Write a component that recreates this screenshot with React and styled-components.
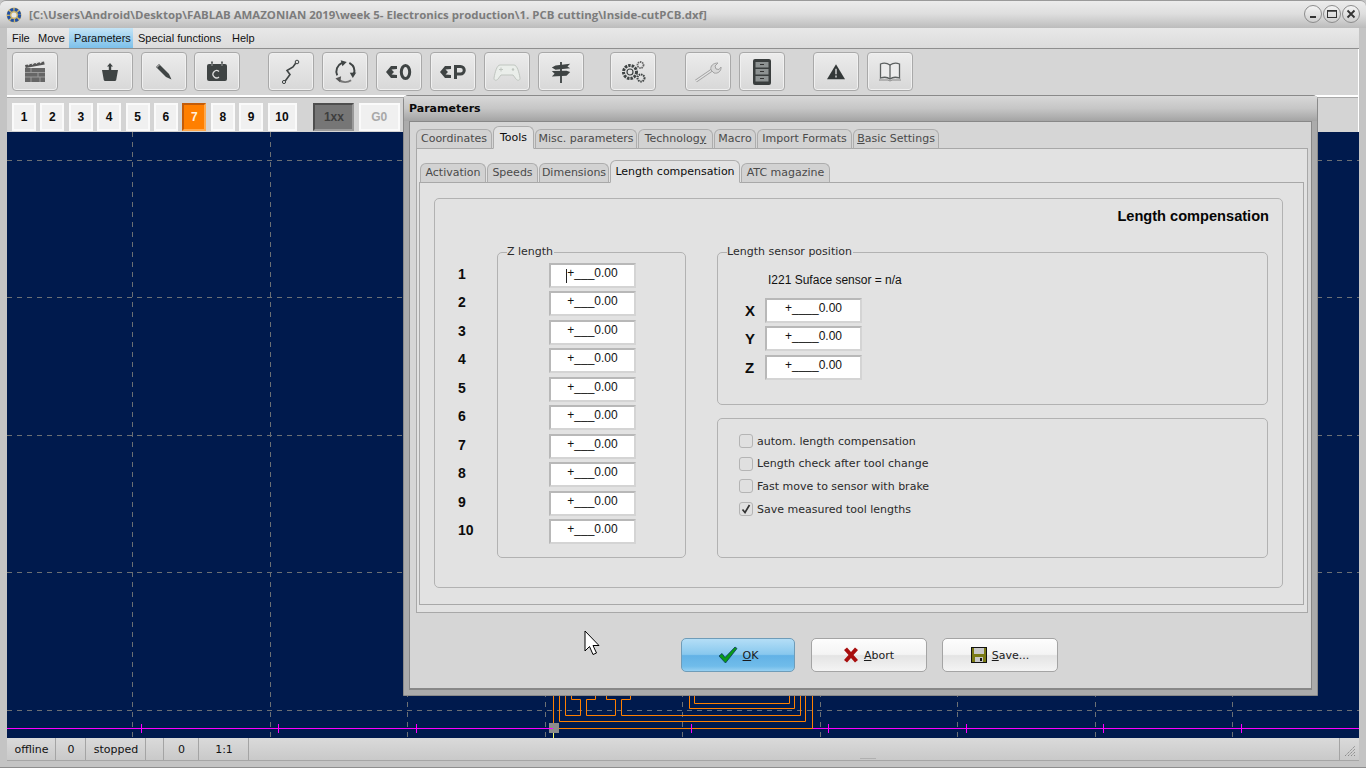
import React from 'react'
import styled, { createGlobalStyle, css } from 'styled-components'

const UI_FONT = '"DejaVu Sans", sans-serif'
const ARIAL = '"Liberation Sans", Arial, sans-serif'

const GlobalStyle = createGlobalStyle`
  html, body {
    margin: 0;
    padding: 0;
    overflow: hidden;
    background: #c8c8c8;
  }
`

const TITLE =
  '[C:\\Users\\Android\\Desktop\\FABLAB AMAZONIAN 2019\\week 5- Electronics production\\1. PCB cutting\\Inside-cutPCB.dxf]'

const MENU = [
  { label: 'File', width: 26 },
  { label: 'Move', width: 36 },
  { label: 'Parameters', width: 64, active: true },
  { label: 'Special functions', width: 94 },
  { label: 'Help', width: 30 },
]

const NUMBERS = [1, 2, 3, 4, 5, 6, 7, 8, 9, 10]

const OUTER_TABS = [
  { label: 'Coordinates', width: 76 },
  { label: 'Tools', width: 41, active: true },
  { label: 'Misc. parameters', width: 102 },
  { label: <>Technolog<u>y</u></>, width: 75 },
  { label: 'Macro', width: 42 },
  { label: 'Import Formats', width: 95 },
  { label: <><u>B</u>asic Settings</>, width: 86 },
]

const INNER_TABS = [
  { label: 'Activation', width: 66 },
  { label: 'Speeds', width: 51 },
  { label: 'Dimensions', width: 70 },
  { label: 'Length compensation', width: 130, active: true },
  { label: 'ATC magazine', width: 89 },
]

const CHECKS = [
  { label: 'autom. length compensation', checked: false },
  { label: 'Length check after tool change', checked: false },
  { label: 'Fast move to sensor with brake', checked: false },
  { label: 'Save measured tool lengths', checked: true },
]

const STATUS = [
  { label: 'offline', width: 49 },
  { label: '0', width: 30 },
  { label: 'stopped', width: 60 },
  { label: '', width: 18 },
  { label: '0', width: 35 },
  { label: '1:1', width: 50 },
]

const GRID_X = [132.5, 270.5, 407.5, 545.5, 682.5, 820.5, 957.5, 1095.5, 1232.5]
const GRID_Y = [160.5, 297.5, 435.5, 572.5, 710.5]
const TICKS = [141.5, 278.5, 416.5, 691.5, 828.5, 966.5, 1103.5, 1241.5]

const Window = styled.div`
  width: 1366px;
  height: 768px;
  display: flex;
  flex-direction: column;
  box-sizing: border-box;
  position: relative;
  overflow: hidden;
  background: #c4c4c4;
  border-bottom: 1px solid #8e8e8e;
  padding: 0 7px 6px;
  font-family: ${UI_FONT};
  font-size: 11px;
  color: #111;
`

const TitleBar = styled.div`
  height: 28px;
  margin: 0 -7px;
  padding: 0 6px;
  box-sizing: border-box;
  display: flex;
  align-items: center;
  gap: 7px;
  border-top: 1px solid #9a9a9a;
  border-radius: 6px 6px 0 0;
  background: linear-gradient(#ececec, #dedede 48%, #bcbcbc);
`

const TitleText = styled.span`
  flex: 1;
  font-family: "Open Sans", sans-serif;
  font-weight: 700;
  font-size: 11.43px;
  color: #7c7c7c;
  white-space: nowrap;
`

const WindowButtons = styled.div`
  display: flex;
  gap: 1px;
  margin-top: -1px;
`

const RoundButton = styled.div`
  width: 18px;
  height: 18px;
  box-sizing: border-box;
  border-radius: 50%;
  border: 1px solid #8c8c8c;
  background: linear-gradient(#f4f4f4, #cfcfcf);
  display: flex;
  align-items: center;
  justify-content: center;
`

const MenuBar = styled.div`
  height: 21px;
  box-sizing: border-box;
  display: flex;
  border-bottom: 1px solid #8f8f8f;
  background: linear-gradient(#e8e8e8, #dcdcdc);
`

const MenuItem = styled.div`
  width: ${(p) => p.$width}px;
  display: flex;
  align-items: center;
  padding-left: 5px;
  box-sizing: border-box;
  font-family: ${ARIAL};
  font-size: 11px;
  ${(p) =>
    p.$active &&
    css`
      background: linear-gradient(#c4e4f6, #7cc0ea);
    `}
`

const ToolBar = styled.div`
  height: 46px;
  box-sizing: border-box;
  display: flex;
  align-items: flex-start;
  padding: 3px 0 0 5px;
  background: #d6d6d6;
  border-right: 1px solid #fff;
`

const ToolGroup = styled.div`
  display: flex;
  gap: ${(p) => p.$gap}px;
  margin-right: ${(p) => p.$after}px;
`

const ToolButton = styled.div`
  width: 46px;
  height: 39px;
  box-sizing: border-box;
  display: flex;
  align-items: center;
  justify-content: center;
  border: 1px solid #a9a9a9;
  border-radius: 4px;
  background: linear-gradient(#ececec, #d8d8d8);
  box-shadow: inset 0 0 0 1px #f0f0f0;
`

const NumberRow = styled.div`
  height: 37px;
  box-sizing: border-box;
  display: flex;
  gap: 4.4px;
  padding: 6px 0 0 5px;
  border-top: 2px solid #fff;
  border-right: 1px solid #fff;
  box-shadow: inset 0 1px 0 #a8a8a8;
  background: #d4d4d4;
`

const NumberButton = styled.div`
  width: ${(p) => p.$width || 24}px;
  height: 28px;
  box-sizing: border-box;
  display: flex;
  align-items: center;
  justify-content: center;
  font-family: ${ARIAL};
  font-weight: 700;
  font-size: 12px;
  color: #0c0c0c;
  background: #f0f0f0;
  border: 2px solid #fafafa;
  margin-left: ${(p) => p.$offset || 0}px;
  ${(p) =>
    p.$active &&
    css`
      background: #ff7f00;
      color: #fff0dd;
      border-color: #c45c08 #ffa94d #ffa94d #c45c08;
    `}
  ${(p) =>
    p.$mode === 'dark' &&
    css`
      background: #767676;
      color: #3e3e3e;
      border-color: #4e4e4e #9a9a9a #9a9a9a #4e4e4e;
    `}
  ${(p) =>
    p.$mode === 'light' &&
    css`
      color: #a8a8a8;
    `}
`

const Canvas = styled.div`
  flex: 1;
  position: relative;
  background: #001a4d;
  min-height: 0;
`

const CanvasDrawing = styled.svg`
  display: block;
  width: 100%;
  height: 100%;
`

const StatusBar = styled.div`
  height: 23px;
  box-sizing: border-box;
  display: flex;
  position: relative;
  background: linear-gradient(#dadada, #c9c9c9);
  border-bottom: 1px solid #a6a6a6;
`

const StatusCell = styled.div`
  width: ${(p) => p.$width}px;
  box-sizing: border-box;
  display: flex;
  align-items: center;
  justify-content: center;
  font-family: ${UI_FONT};
  font-size: 11px;
  padding-left: 1px;
  border-right: 1px solid #a4a4a4;
`

const StatusFill = styled.div`
  flex: 1;
`

const GripCell = styled.div`
  width: 19px;
  border-left: 1px solid #a4a4a4;
  display: flex;
  align-items: flex-end;
  justify-content: center;
  padding-bottom: 3px;
`

const Handle = styled.div`
  position: absolute;
  left: 853px;
  bottom: 1px;
  width: 16px;
  height: 1px;
  background: #b0b0b0;
`

const Dialog = styled.div`
  position: absolute;
  left: 403px;
  top: 95px;
  width: 915px;
  height: 601px;
  box-sizing: border-box;
  display: flex;
  flex-direction: column;
  padding: 0 5px 5px 5px;
  background: #ababab;
  border: 1px solid #8a8a8a;
  border-radius: 5px 5px 0 0;
  font-family: ${UI_FONT};
`

const DialogTitle = styled.div`
  height: 25px;
  margin: 0 -5px;
  padding: 0 5px;
  display: flex;
  align-items: center;
  font-family: ${UI_FONT};
  font-size: 11px;
  font-weight: 700;
  color: #0a0a0a;
  background: linear-gradient(#d8d8d8, #c6c6c6 50%, #a4a4a4);
`

const DialogBody = styled.div`
  flex: 1;
  display: flex;
  flex-direction: column;
  background: #d6d6d6;
  border: 1px solid #888;
  border-width: 1px 1px 2px 1px;
  padding: 5px 3px 0 6px;
`

const TabRow = styled.div`
  display: flex;
  align-items: flex-end;
  height: ${(p) => p.$height}px;
  gap: 1px;
  padding-left: ${(p) => p.$inset || 0}px;
  margin-bottom: -1px;
  position: relative;
  z-index: 1;
`

const Tab = styled.div`
  width: ${(p) => p.$width}px;
  height: 20px;
  box-sizing: border-box;
  display: flex;
  align-items: center;
  justify-content: center;
  border: 1px solid #adadad;
  border-bottom-color: #a8a8a8;
  border-radius: 6px 6px 0 0;
  background: #d2d2d2;
  color: #4a4a4a;
  font-size: 11px;
  white-space: nowrap;
  padding-bottom: ${(p) => p.$lift}px;
  ${(p) =>
    p.$active &&
    css`
      height: 23px;
      color: #0c0c0c;
      background: #e2e2e2;
      border-bottom-color: #e2e2e2;
      padding-bottom: ${p.$lift - 1}px;
    `}
`

const TabPane = styled.div`
  flex: ${(p) => (p.$grow ? 1 : 'none')};
  display: flex;
  flex-direction: column;
  height: ${(p) => p.$height || 'auto'};
  box-sizing: border-box;
  background: #e2e2e2;
  border: 1px solid #a8a8a8;
  padding: ${(p) => p.$padding};
`

const Panel = styled.div`
  flex: 1;
  box-sizing: border-box;
  border: 1px solid #b2b2b2;
  border-radius: 5px;
  display: flex;
  flex-direction: column;
  padding: 0 13px 29px 23px;
`

const PanelHeading = styled.div`
  font-family: ${ARIAL};
  font-weight: 700;
  font-size: 14.6px;
  text-align: right;
  height: 53px;
  padding-top: 9px;
  box-sizing: border-box;
  color: #060606;
`

const Columns = styled.div`
  flex: 1;
  display: grid;
  grid-template-columns: 39px 189px 582px;
  column-gap: 0;
`

const NumberColumn = styled.div`
  padding-top: 10px;
`

const RowLabel = styled.div`
  height: 28.45px;
  line-height: 24px;
  font-family: ${ARIAL};
  font-weight: 700;
  font-size: 14px;
  color: #0c0c0c;
`

const GroupBox = styled.div`
  position: relative;
  box-sizing: border-box;
  border: 1px solid #b2b2b2;
  border-radius: 5px;
  height: ${(p) => p.$height || 'auto'};
  padding: ${(p) => p.$padding};
`

const Legend = styled.span`
  position: absolute;
  top: -8px;
  left: ${(p) => p.$left}px;
  padding: 0 1px 0 0;
  background: #e2e2e2;
  font-size: 11px;
  line-height: 14px;
  color: #2c2c2c;
`

const FieldBox = styled.div`
  position: relative;
  width: ${(p) => p.$width}px;
  height: 25px;
  box-sizing: border-box;
  background: #fff;
  border: 2px solid #d4d4d4;
  border-top-color: #b8b8b8;
  border-left-color: #b8b8b8;
  display: flex;
  justify-content: center;
  font-family: ${ARIAL};
  font-size: 12px;
  line-height: 16px;
  color: #111;
  ${(p) =>
    p.$caret &&
    css`
      &::before {
        content: '';
        position: absolute;
        left: 15px;
        top: 4px;
        width: 1px;
        height: 14px;
        background: #222;
      }
    `}
`

const FieldRow = styled.div`
  height: 28.45px;
  display: flex;
  justify-content: ${(p) => p.$justify || 'flex-start'};
`

const RightColumn = styled.div`
  display: flex;
  flex-direction: column;
  gap: 13px;
  padding-left: 31px;
`

const SensorText = styled.div`
  font-family: ${ARIAL};
  font-size: 12px;
  padding-left: 50px;
  height: 45px;
  box-sizing: border-box;
  padding-top: 20px;
  color: #111;
`

const AxisLabel = styled.div`
  width: 47px;
  padding-left: 27px;
  box-sizing: border-box;
  font-family: ${ARIAL};
  font-weight: 700;
  font-size: 15px;
  line-height: 25px;
  color: #0c0c0c;
`

const CheckGroup = styled(GroupBox)`
  flex: 1;
`

const CheckRow = styled.label`
  height: 22.6px;
  display: flex;
  align-items: center;
  gap: 4px;
  font-size: 11px;
  color: #2a2a2a;
`

const CheckBox = styled.span`
  width: 14px;
  height: 14px;
  box-sizing: border-box;
  border: 1px solid #b4b4b4;
  border-radius: 3px;
  background: #e0e0e0;
  display: flex;
  align-items: center;
  justify-content: center;
`

const ButtonRow = styled.div`
  flex: 1;
  display: flex;
  padding: 25px 0 0 265px;
  gap: 15.5px;
`

const DialogButton = styled.div`
  width: ${(p) => p.$width}px;
  height: 34px;
  box-sizing: border-box;
  display: flex;
  align-items: center;
  justify-content: center;
  gap: 5px;
  border-radius: 5px;
  border: 1px solid #a4a4a4;
  font-family: ${UI_FONT};
  font-size: 11px;
  color: #1a1a1a;
  background: linear-gradient(#fdfdfd, #f4f4f4 48%, #e4e4e4 52%, #f4f4f4);
  ${(p) =>
    p.$primary &&
    css`
      border-color: #6f9cb8;
      background: linear-gradient(#b4def6, #88c8ee 48%, #62b2e6 52%, #70bcea 85%, #96d0f2);
    `}
`

const Pointer = styled.svg`
  position: absolute;
  left: 584px;
  top: 630px;
`

const Logo = () => (
  <svg width="16" height="16" viewBox="0 0 16 16">
    <circle cx="8" cy="8" r="7.5" fill="#c9b36a" />
    <circle cx="8" cy="8" r="5.6" fill="none" stroke="#1f4fa8" strokeWidth="3" strokeDasharray="3 1.4" />
    <circle cx="8" cy="8" r="2.6" fill="#e8e8e8" />
  </svg>
)

const ICON = '#3f4444'

// the pointed loop shared by the "back to 0" and "back to P" buttons
const BackLoop = () => (
  <path d="M13 5H7L2 11l5 6h6v-3l-5.500-.5L10 11 7.500 8.500 13 8z" fill={ICON} />
)

const toolIcons = [
  // clapper board
  <svg key="clap" width="24" height="24" viewBox="0 0 24 24">
    <path d="M2 5l19-3.500.7 3L2.700 8z" fill="#555" />
    <path d="M5 5.200l2-2.200M9 4.500l2-2.200M13 3.700l2-2.200M17 3l2-1.700" stroke="#ddd" strokeWidth="1.200" />
    <rect x="2" y="8" width="20" height="14" fill="#666" />
    <path d="M2 12.500h20M2 17h20M8 8v4.500M15 12.500V17M8 17v5M17 17v5" stroke="#9a9a9a" />
  </svg>,
  // box with arrow up
  <svg key="box" width="20" height="24" viewBox="0 0 20 24">
    <path d="M10 3l3 3.500h-1.800V10H8.800V6.500H7z" fill={ICON} />
    <path d="M2 10h16l-1.800 10a1.500 1.500 0 0 1-1.500 1H5.300a1.500 1.500 0 0 1-1.500-1z" fill={ICON} />
  </svg>,
  // pencil
  <svg key="pen" width="20" height="20" viewBox="0 0 20 20">
    <path d="M2 5l3-3 10 10 2.500 5.500-5.500-2.500z" fill={ICON} />
    <path d="M2.500 5.500l3-3" stroke="#9c9c9c" strokeWidth="1.500" />
  </svg>,
  // calendar with C
  <svg key="cal" width="24" height="24" viewBox="0 0 24 24">
    <rect x="2" y="4" width="20" height="17" rx="2" fill={ICON} />
    <path d="M7 1.500v5M17 1.500v5" stroke={ICON} strokeWidth="1.600" />
    <path d="M7 3v3M17 3v3" stroke="#ddd" strokeWidth=".6" />
    <path d="M14 11.500a3.600 3.600 0 1 0 0 5.400" stroke="#ddd" strokeWidth="1.300" fill="none" />
  </svg>,
  // path with nodes
  <svg key="path" width="24" height="26" viewBox="0 0 24 26">
    <path d="M5.500 23l5.500-7.500-3-4 6-3.500 3.500-5" stroke={ICON} strokeWidth="1.600" fill="none" />
    <circle cx="5" cy="23" r="1.600" fill="#ddd" stroke={ICON} />
    <circle cx="18" cy="3" r="1.800" fill="#ddd" stroke={ICON} />
  </svg>,
  // rotating arrows
  <svg key="cycle" width="26" height="26" viewBox="0 0 30 30">
    <path d="M6 19C3.500 13 6 7 11.500 4.500" stroke={ICON} strokeWidth="2.200" fill="none" />
    <path d="M10 1.500l7 2-5 5z" fill={ICON} />
    <path d="M20 4.500c5 3 7 8 5 13" stroke={ICON} strokeWidth="2.200" fill="none" />
    <path d="M28 15.500l-4 6.500-3.500-6z" fill={ICON} />
    <path d="M22 24.500c-4 3-10 3-14-.5" stroke="#777" strokeWidth="2.200" fill="none" />
    <path d="M10.500 20l-1 7-5.500-4.500z" fill="#555" />
  </svg>,
  // back to 0
  <svg key="zero" width="30" height="22" viewBox="0 0 30 22">
    <BackLoop />
    <ellipse cx="21.500" cy="11" rx="4.200" ry="6.500" fill="none" stroke={ICON} strokeWidth="3" />
  </svg>,
  // back to P
  <svg key="park" width="30" height="22" viewBox="0 0 30 22">
    <BackLoop />
    <path d="M17.500 18V5.500h5a3.500 3.500 0 0 1 0 7.500h-5" fill="none" stroke={ICON} strokeWidth="3" />
  </svg>,
  // gamepad, greyed out
  <svg key="pad" width="28" height="20" viewBox="0 0 28 20">
    <path d="M7 3h14c3 0 5 7 6 13 .3 2.500-2.500 3-4 1l-3-4H8l-3 4c-1.500 2-4.300 1.500-4-1C2 10 4 3 7 3z" fill="#eaeeea" stroke="#c0c6c0" />
    <circle cx="20" cy="7.500" r="1.200" fill="#c0c6c0" />
    <path d="M6 7.500h4M8 5.500v4" stroke="#c0c6c0" />
  </svg>,
  // signpost
  <svg key="sign" width="22" height="24" viewBox="0 0 24 26">
    <path d="M12 2v23" stroke={ICON} strokeWidth="2" />
    <path d="M2 8l4-2 16-2-3 3 3 2-16 1.500z" fill={ICON} />
    <path d="M22 13l-4-1.500-16 .5 3 3-3 3 16-1z" fill={ICON} />
  </svg>,
  // gears
  <svg key="gears" width="26" height="26" viewBox="0 0 26 26">
    <circle cx="10" cy="13" r="6.500" fill="none" stroke={ICON} strokeWidth="3" strokeDasharray="2.500 1" />
    <circle cx="10" cy="13" r="3" fill="none" stroke={ICON} strokeWidth="1.200" />
    <circle cx="20.500" cy="6" r="3" fill="none" stroke="#666" strokeWidth="1.800" strokeDasharray="1.500 .7" />
    <circle cx="21" cy="19" r="3.500" fill="none" stroke={ICON} strokeWidth="2" strokeDasharray="1.500 .8" />
  </svg>,
  // wrench, greyed out
  <svg key="wrench" width="30" height="26" viewBox="0 0 30 26">
    <path d="M3 22L19 11" stroke="#a2a2a2" strokeWidth="3" />
    <path d="M3 22L19 11" stroke="#e6e6e6" strokeWidth="1.400" />
    <path d="M18 11c-1-4 2-7 7-7l-3 3 1 3 3 .5 2-2.500c.5 4-3 7-7 6z" fill="#d8d8d8" stroke="#a2a2a2" />
  </svg>,
  // cabinet
  <svg key="cab" width="20" height="28" viewBox="0 0 20 28">
    <rect x="1" y="1" width="18" height="26" rx="2" fill="#3a3e3e" />
    <rect x="3.500" y="4" width="13" height="5.500" fill="#8d9292" />
    <rect x="3.500" y="11" width="13" height="5.500" fill="#8d9292" />
    <rect x="3.500" y="18" width="13" height="5.500" fill="#8d9292" />
    <path d="M8 6.500h4M8 13.500h4M8 20.500h4" stroke="#333" />
  </svg>,
  // warning triangle
  <svg key="warn" width="20" height="18" viewBox="0 0 22 20">
    <path d="M11 1.500L21 18H1z" fill="#333838" />
    <path d="M11 6.500v6M11 14v2" stroke="#ddd" strokeWidth="1.500" />
  </svg>,
  // open book
  <svg key="book" width="24" height="22" viewBox="0 0 24 22">
    <path d="M12 4C9 2 5 2 2.500 3v14c3-1 7-1 9.500 1 2.500-2 6.500-2 9.500-1V3C19 2 15 2 12 4z" fill="#ececec" stroke="#5c6060" strokeWidth="1.300" />
    <path d="M12 4v14" stroke="#5c6060" strokeWidth="1.300" />
    <path d="M1 19h9l2 1 2-1h9" fill="none" stroke="#888" />
  </svg>,
]

const TOOL_GROUPS = [
  { from: 0, to: 1, gap: 8, after: 29 },
  { from: 1, to: 4, gap: 7.5, after: 28 },
  { from: 4, to: 10, gap: 8, after: 26 },
  { from: 10, to: 11, gap: 8, after: 29 },
  { from: 11, to: 13, gap: 8, after: 28 },
  { from: 13, to: 15, gap: 8, after: 0 },
]

const Field = ({ width, bars, caret }) => (
  <FieldBox $width={width} $caret={caret}>
    {'+' + '_'.repeat(bars) + '0.00'}
  </FieldBox>
)

const PcbDrawing = () => (
  <CanvasDrawing viewBox="7 132 1352 606">
    <g stroke="#6c7074" strokeWidth="1" strokeDasharray="5 5">
      {GRID_X.map((x) => (
        <line key={x} x1={x} y1="132" x2={x} y2="738" />
      ))}
      {GRID_Y.map((y) => (
        <line key={y} x1="7" y1={y} x2="1359" y2={y} />
      ))}
    </g>
    <g fill="none" stroke="#ff8000" strokeWidth="1">
      <path d="M553.500 690v38M559.500 690v31.500H805.500V690M800.500 690v25.500H621.500V699.500H630.500V690" />
      <path d="M565.500 690v25.500H580.500V699.500H571.500V690M595.500 690v9.500H586.500V715.500H615.500V699.500H606.500V690" />
      <path d="M689.500 690v18.500H794.500V690M694.500 690v13.500H789.500V690" />
    </g>
    <line x1="7" y1="728.500" x2="1359" y2="728.500" stroke="#ff00ff" />
    <path d="M553 728.500H812.500V690" fill="none" stroke="#ff8000" />
    {TICKS.map((x) => (
      <line key={x} x1={x} y1="724" x2={x} y2="733" stroke="#ff00ff" />
    ))}
    <rect x="549" y="723" width="10" height="10" fill="#8c8c8c" />
    <line x1="553.500" y1="733" x2="553.500" y2="738" stroke="#ffff66" />
    <line x1="549" y1="728.500" x2="553" y2="728.500" stroke="#ff00ff" />
  </CanvasDrawing>
)

export default function App() {
  return (
    <>
      <GlobalStyle />
      <Window>
        <TitleBar>
          <Logo />
          <TitleText>{TITLE}</TitleText>
          <WindowButtons>
            <RoundButton>
              <svg width="10" height="10" viewBox="0 0 10 10">
                <path d="M2 8h6" stroke="#333" strokeWidth="2" />
              </svg>
            </RoundButton>
            <RoundButton>
              <svg width="10" height="10" viewBox="0 0 10 10">
                <rect x=".5" y="1.500" width="9" height="7" fill="none" stroke="#333" />
                <path d="M.5 2h9" stroke="#333" strokeWidth="1.500" />
              </svg>
            </RoundButton>
            <RoundButton>
              <svg width="10" height="10" viewBox="0 0 10 10">
                <path d="M1.500 1.500l7 7M8.500 1.500l-7 7" stroke="#333" strokeWidth="1.800" />
              </svg>
            </RoundButton>
          </WindowButtons>
        </TitleBar>

        <MenuBar>
          {MENU.map((m) => (
            <MenuItem key={m.label} $width={m.width} $active={m.active}>
              {m.label}
            </MenuItem>
          ))}
        </MenuBar>

        <ToolBar>
          {TOOL_GROUPS.map((g) => (
            <ToolGroup key={g.from} $gap={g.gap} $after={g.after}>
              {toolIcons.slice(g.from, g.to).map((icon) => (
                <ToolButton key={icon.key}>{icon}</ToolButton>
              ))}
            </ToolGroup>
          ))}
        </ToolBar>

        <NumberRow>
          {NUMBERS.map((n) => (
            <NumberButton key={n} $active={n === 7} $width={n === 10 ? 29 : 24}>
              {n}
            </NumberButton>
          ))}
          <NumberButton $width={41} $offset={12.5} $mode="dark">
            1xx
          </NumberButton>
          <NumberButton $width={41} $mode="light">
            G0
          </NumberButton>
        </NumberRow>

        <Canvas>
          <PcbDrawing />
        </Canvas>

        <StatusBar>
          {STATUS.map((s, i) => (
            <StatusCell key={i} $width={s.width}>
              {s.label}
            </StatusCell>
          ))}
          <StatusFill />
          <Handle />
          <GripCell>
            <svg width="12" height="12" viewBox="0 0 12 12">
              <path d="M1 11l10-10M4 11l7-7M7 11l4-4M10 11l1-1" stroke="#8a8a8a" strokeDasharray="1.500 .7" />
            </svg>
          </GripCell>
        </StatusBar>

        <Dialog>
          <DialogTitle>Parameters</DialogTitle>
          <DialogBody>
            <TabRow $height={22}>
              {OUTER_TABS.map((t, i) => (
                <Tab key={i} $width={t.width} $active={t.active} $lift={2}>
                  {t.label}
                </Tab>
              ))}
            </TabRow>
            <TabPane $height="465px" $padding="12px 3px 7px 2px">
              <TabRow $height={22} $inset={1}>
                {INNER_TABS.map((t) => (
                  <Tab key={t.label} $width={t.width} $active={t.active} $lift={1}>
                    {t.label}
                  </Tab>
                ))}
              </TabRow>
              <TabPane $grow $padding="15px 20px 16px 14px">
                <Panel>
                  <PanelHeading>Length compensation</PanelHeading>
                  <Columns>
                    <NumberColumn>
                      {NUMBERS.map((n) => (
                        <RowLabel key={n}>{n}</RowLabel>
                      ))}
                    </NumberColumn>
                    <GroupBox $padding="10px 0 0 51px">
                      <Legend $left={9}>Z length</Legend>
                      {NUMBERS.map((n) => (
                        <FieldRow key={n}>
                          <Field width={87} bars={3} caret={n === 1} />
                        </FieldRow>
                      ))}
                    </GroupBox>
                    <RightColumn>
                      <GroupBox $height="153px" $padding="0">
                        <Legend $left={9}>Length sensor position</Legend>
                        <SensorText>I221 Suface sensor = n/a</SensorText>
                        {['X', 'Y', 'Z'].map((axis) => (
                          <FieldRow key={axis}>
                            <AxisLabel>{axis}</AxisLabel>
                            <Field width={97} bars={4} />
                          </FieldRow>
                        ))}
                      </GroupBox>
                      <CheckGroup $padding="11px 0 0 21px">
                        {CHECKS.map((c) => (
                          <CheckRow key={c.label}>
                            <CheckBox>
                              {c.checked && (
                                <svg width="10" height="10" viewBox="0 0 10 10">
                                  <path d="M1.500 5.500l2.500 3L8.500 1" fill="none" stroke="#333" strokeWidth="1.700" />
                                </svg>
                              )}
                            </CheckBox>
                            {c.label}
                          </CheckRow>
                        ))}
                      </CheckGroup>
                    </RightColumn>
                  </Columns>
                </Panel>
              </TabPane>
            </TabPane>
            <ButtonRow>
              <DialogButton $width={114} $primary>
                <svg width="20" height="18" viewBox="0 0 20 18">
                  <path d="M1 10l3-2.500 3 4L17 1l2 1.500L7.500 17z" fill="#0a9a18" stroke="#0a3a60" strokeWidth=".8" />
                </svg>
                <span>
                  <u>O</u>K
                </span>
              </DialogButton>
              <DialogButton $width={116}>
                <svg width="16" height="16" viewBox="0 0 16 16">
                  <path d="M1 3l3-2.500 4 4.500 4-4.500 3 2.500-4.500 5 4.500 5-3 2.500-4-4.500-4 4.500-3-2.500 4.500-5z" fill="#a80e0e" />
                </svg>
                <span>
                  <u>A</u>bort
                </span>
              </DialogButton>
              <DialogButton $width={116}>
                <svg width="16" height="16" viewBox="0 0 16 16">
                  <rect x=".5" y=".5" width="15" height="15" fill="#7a7a14" stroke="#111" />
                  <rect x="3" y="1" width="10" height="6" fill="#c8c8c8" />
                  <rect x="4" y="10" width="8" height="5" fill="#c8c8c8" />
                  <rect x="9" y="11" width="2" height="3" fill="#111" />
                </svg>
                <span>
                  <u>S</u>ave...
                </span>
              </DialogButton>
            </ButtonRow>
          </DialogBody>
        </Dialog>

        <Pointer width="17" height="27" viewBox="0 0 17 27">
          <path d="M1 1v20l4.500-4.500 3.500 8 3.500-1.500-3.500-7.500h6z" fill="#fff" stroke="#000" />
        </Pointer>
      </Window>
    </>
  )
}
